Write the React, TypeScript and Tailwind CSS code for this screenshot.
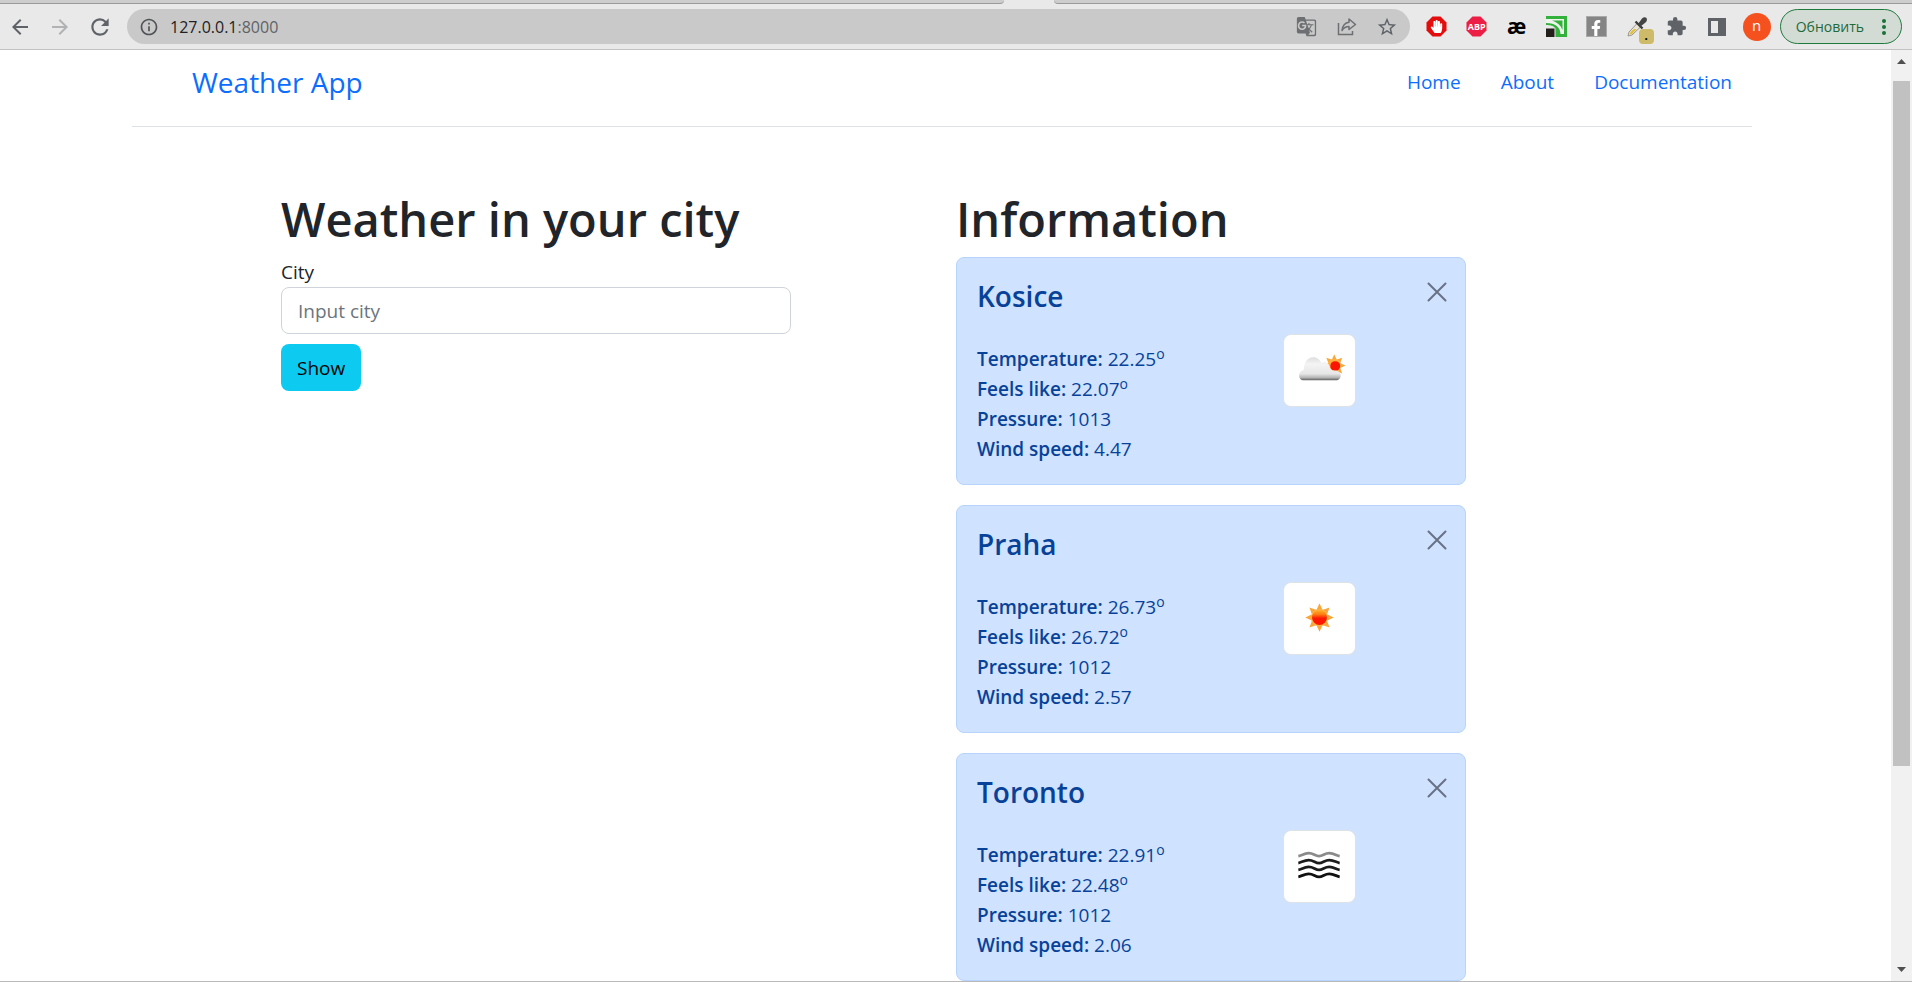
import React from 'react';
import {
  MdArrowBack,
  MdArrowForward,
  MdRefresh,
  MdInfoOutline,
  MdGTranslate,
  MdStarOutline,
  MdExtension,
} from 'react-icons/md';
import { FaHandPaper, FaFacebookF } from 'react-icons/fa';

type City = {
  name: string;
  temperature: string;
  feelsLike: string;
  pressure: string;
  wind: string;
  icon: React.ReactNode;
};

function SunRays({ cx, cy, r }: { cx: number; cy: number; r: number }) {
  return (
    <g transform={`translate(${cx} ${cy}) scale(${r / 14})`}>
      {[0, 45, 90, 135, 180, 225, 270, 315].map((angle) => (
        <path key={angle} d="M-3 -8 L0 -14.500 L3 -8 Z" fill="#f9a73a" transform={`rotate(${angle})`} />
      ))}
      <circle r="8.8" fill="#fbb040" />
    </g>
  );
}

function SunIcon() {
  return (
    <svg viewBox="0 0 62 62" className="size-full" aria-hidden="true">
      <defs>
        <linearGradient id="sun-core" x1="0" y1="0" x2="0" y2="1">
          <stop offset="0" stopColor="#ffb52e" />
          <stop offset="0.3" stopColor="#ff7a10" />
          <stop offset="0.55" stopColor="#fb1a05" />
          <stop offset="1" stopColor="#ff1500" />
        </linearGradient>
      </defs>
      <SunRays cx={31} cy={30} r={14} />
      <circle cx="31" cy="30" r="7.6" fill="url(#sun-core)" />
    </svg>
  );
}

function CloudSunIcon() {
  return (
    <svg viewBox="0 0 62 62" className="size-full" aria-hidden="true">
      <defs>
        <linearGradient id="cloud-body" x1="0" y1="0" x2="0" y2="1">
          <stop offset="0" stopColor="#dedede" />
          <stop offset="0.3" stopColor="#f4f4f4" />
          <stop offset="0.72" stopColor="#e6e6e6" />
          <stop offset="0.88" stopColor="#b5b5b5" />
          <stop offset="1" stopColor="#5c5c5c" />
        </linearGradient>
      </defs>
      <SunRays cx={46} cy={26} r={11} />
      <circle cx="47" cy="26.500" r="5" fill="#fb1505" />
      <path
        d="M15 41 C12 41 10 38.500 10.300 35.500 C10.600 32.500 13 31 15 30.500 C15 22.500 19 17.500 24.500 17.500 C29 17.500 31.500 20 33 23.500 C36.500 21.500 40.500 23 41.500 27.500 C42 30 43 30.800 46 31 C50 31 52.500 33 52.500 36 C52.500 39.500 50 41 47 41 Z"
        fill="url(#cloud-body)"
      />
    </svg>
  );
}

function MistIcon() {
  const wave = 'c3 -0.500 6 -3 10.500 -3 c5 0 6.500 3 10.500 3 c4 0 5.500 -3 10.500 -3 c4.500 0 7.500 2.500 10.500 3';
  return (
    <svg viewBox="0 0 62 62" className="size-full" fill="none" strokeWidth="2.800" aria-hidden="true">
      <path d={`M9.500 20.500 ${wave}`} stroke="#8a8a8a" />
      <path d={`M9.500 27.500 ${wave}`} stroke="#1c1c1c" />
      <path d={`M9.500 34.500 ${wave}`} stroke="#1c1c1c" />
      <path d={`M9.500 41.500 ${wave}`} stroke="#111111" />
    </svg>
  );
}

const cities: City[] = [
  { name: 'Kosice', temperature: '22.25', feelsLike: '22.07', pressure: '1013', wind: '4.47', icon: <CloudSunIcon /> },
  { name: 'Praha', temperature: '26.73', feelsLike: '26.72', pressure: '1012', wind: '2.57', icon: <SunIcon /> },
  { name: 'Toronto', temperature: '22.91', feelsLike: '22.48', pressure: '1012', wind: '2.06', icon: <MistIcon /> },
];

function ToolButton({ label, children }: { label: string; children: React.ReactNode }) {
  return (
    <button type="button" aria-label={label} className="flex h-9 w-10 shrink-0 items-center justify-center text-[#5f6368]">
      {children}
    </button>
  );
}

const octagon = 'M6.500 0.500 H14.500 L20.500 6.500 V14.500 L14.500 20.500 H6.500 L0.500 14.500 V6.500 Z';

function BrowserBar() {
  return (
    <div className="shrink-0 border-b border-[#c2c2c2] bg-[#e9e9e9]">
      <div className="flex h-1">
        <div className="grow-[1004] basis-0 rounded-br-lg border-b border-[#999] bg-[#cdcdcd]" />
        <div className="w-[50px]" />
        <div className="grow-[858] basis-0 rounded-bl-lg border-b border-[#999] bg-[#cdcdcd]" />
      </div>
      <div className="flex h-[45px] items-center pr-[10px]">
        <ToolButton label="Back"><MdArrowBack size={24} /></ToolButton>
        <ToolButton label="Forward"><MdArrowForward size={24} className="text-[#b0b2b4]" /></ToolButton>
        <ToolButton label="Reload"><MdRefresh size={26} /></ToolButton>
        <div className="mx-[7px] flex h-[35px] min-w-0 grow items-center rounded-full bg-[#c9c9c9] pr-[3px]">
          <MdInfoOutline size={20} className="ml-3 shrink-0 text-[#505357]" />
          <span className="ml-[11px] grow font-['Open_Sans','Noto_Sans',sans-serif] text-[16px] text-[#1f2124]">
            127.0.0.1<span className="text-[#5f6368]">:8000</span>
          </span>
          <ToolButton label="Translate"><MdGTranslate size={21} className="text-[#6d6f72]" /></ToolButton>
          <ToolButton label="Share">
            <svg width="20" height="20" viewBox="0 0 20 20" fill="none" stroke="#6d6f72" strokeWidth="1.500" aria-hidden="true">
              <path d="M1.500 6 V17.500 H15.500 V14" />
              <path d="M12 2 L18.500 7.500 L12 12.500 V9.500 C8.500 9.500 6.500 11 5 13.500 C5.500 9 8 5.800 12 5.300 Z" strokeLinejoin="round" />
            </svg>
          </ToolButton>
          <ToolButton label="Bookmark"><MdStarOutline size={22} /></ToolButton>
        </div>
        <ToolButton label="AdBlock">
          <span className="relative flex size-[21px] items-center justify-center">
            <svg viewBox="0 0 21 21" className="absolute inset-0 size-full" aria-hidden="true">
              <path d={octagon} fill="#e40d0d" />
            </svg>
            <FaHandPaper size={13} className="relative text-white" />
          </span>
        </ToolButton>
        <ToolButton label="Adblock Plus">
          <span className="relative flex size-[21px] items-center justify-center">
            <svg viewBox="0 0 21 21" className="absolute inset-0 size-full" aria-hidden="true">
              <path d={octagon} fill="#ed1e45" />
            </svg>
            <span className="relative font-['Open_Sans',sans-serif] text-[9px] font-bold text-white">ABP</span>
          </span>
        </ToolButton>
        <ToolButton label="Dictionary">
          <span className="pb-[2px] font-['Open_Sans',sans-serif] text-[21px] leading-5 font-bold text-black">æ</span>
        </ToolButton>
        <ToolButton label="Wallet">
          <svg width="21" height="21" viewBox="0 0 21 21" aria-hidden="true">
            <path d="M0 0 H21 V21 H9 V12 H0 Z" fill="#32b13b" />
            <path d="M0 3 H18 V18 H14.500 C14.500 11.500 9.500 7 0 7 Z" fill="#eef3ee" />
            <path d="M6 4.500 H16.500 V14 C14.500 9 11 6 6 4.500 Z" fill="#32b13b" />
            <path d="M0 9 C4 9 7.500 9.500 9.500 12.500 V21 H8.500 V12 H0 Z" fill="#e9e9e9" />
            <path d="M0 12.500 H8.500 V21 H0 Z" fill="#231f1a" />
          </svg>
        </ToolButton>
        <ToolButton label="Facebook">
          <span className="flex size-[21px] items-end justify-end border border-[#a9a9a9] bg-[#858585] pr-[2px]">
            <FaFacebookF size={16} className="text-white" />
          </span>
        </ToolButton>
        <ToolButton label="Color picker">
          <span className="relative block size-5">
            <svg viewBox="0 0 20 20" className="size-full" aria-hidden="true">
              <path d="M1 19 L2 15 L10 6.500 L13.500 10 L5 18 Z" fill="#e8e4d8" stroke="#9a968c" />
              <path d="M2.500 17.500 L4 14.500 L7 12 L9.500 12 L5 17 Z" fill="#e2bf33" />
              <path d="M8.500 4.500 L15.500 11.500" stroke="#3b3b3b" strokeWidth="2.400" />
              <path d="M11 7 L15 1.500 C16.500 0 18.500 0 19.500 1 C20.500 3 19.500 4.500 18.500 5.500 L13.500 9.500 Z" fill="#454545" />
            </svg>
            <span className="absolute top-3 left-3 flex size-[15px] items-center justify-center rounded-sm bg-[#cdbb69] text-[12px] font-bold text-black">.</span>
          </span>
        </ToolButton>
        <ToolButton label="Extensions"><MdExtension size={21} /></ToolButton>
        <ToolButton label="Side panel">
          <svg width="18" height="18" viewBox="0 0 18 18" aria-hidden="true">
            <path d="M0 0 H18 V18 H0 Z M3 3 V15 H10 V3 Z" fill="#5f6368" fillRule="evenodd" />
          </svg>
        </ToolButton>
        <ToolButton label="Profile">
          <span className="flex size-7 items-center justify-center rounded-full bg-[#f4511e] pb-[2px] font-['Open_Sans',sans-serif] text-[15px] text-white">n</span>
        </ToolButton>
        <button
          type="button"
          className="ml-[3px] flex h-[35px] shrink-0 items-center gap-[18px] rounded-full border border-[#1e7a3c] bg-[#d3dbd5] px-[15px] font-['Open_Sans','Noto_Sans',sans-serif] text-[14px] text-[#1e6a38]"
        >
          Обновить
          <svg width="4" height="16" viewBox="0 0 4 16" fill="#1a7037" aria-hidden="true">
            <circle cx="2" cy="2" r="2" />
            <circle cx="2" cy="8" r="2" />
            <circle cx="2" cy="14" r="2" />
          </svg>
        </button>
      </div>
    </div>
  );
}

function Fact({ label, children }: { label: string; children: React.ReactNode }) {
  return (
    <p>
      <b className="font-semibold">{label}:</b> {children}
    </p>
  );
}

function Degrees({ value }: { value: string }) {
  return (
    <>
      {value}
      <sup className="text-[14px]">o</sup>
    </>
  );
}

function CityCard({ city }: { city: City }) {
  return (
    <article className="relative rounded-lg border border-[#b6d4fe] bg-[#cfe2ff] p-5 text-[#084298]">
      <h2 className="text-[28px] leading-9 font-semibold">{city.name}</h2>
      <div className="mt-5 grid grid-cols-[306px_1fr]">
        <div className="pt-[10px]">
          <Fact label="Temperature"><Degrees value={city.temperature} /></Fact>
          <Fact label="Feels like"><Degrees value={city.feelsLike} /></Fact>
          <Fact label="Pressure">{city.pressure}</Fact>
          <Fact label="Wind speed">{city.wind}</Fact>
        </div>
        <div className="size-[73px] rounded-lg border border-[#dee2e6] bg-white p-[5px]">{city.icon}</div>
      </div>
      <button type="button" aria-label={`Remove ${city.name}`} className="absolute top-[23px] right-[17px] p-px text-[#687284]">
        <svg width="20" height="20" viewBox="0 0 20 20" fill="none" stroke="currentColor" strokeWidth="2" strokeLinecap="round" aria-hidden="true">
          <path d="M1.500 1.500 L18.500 18.500 M18.500 1.500 L1.500 18.500" />
        </svg>
      </button>
    </article>
  );
}

function ScrollBar() {
  return (
    <div className="flex w-[21px] shrink-0 flex-col items-center justify-between bg-[#f1f1f1] py-[9px]" aria-hidden="true">
      <svg width="9" height="5" viewBox="0 0 9 5" fill="#505050"><path d="M0 5 L4.500 0 L9 5 Z" /></svg>
      <div className="mt-[17px] mb-auto h-[75%] w-[17px] bg-[#c1c1c1]" />
      <svg width="9" height="5" viewBox="0 0 9 5" fill="#505050"><path d="M0 0 L4.500 5 L9 0 Z" /></svg>
    </div>
  );
}

export default function App() {
  return (
    <div className="flex h-screen flex-col overflow-hidden border-b border-[#b9b9b9] bg-white">
      <BrowserBar />
      <div className="flex min-h-0 grow">
        <div className="min-w-0 grow overflow-hidden font-['Open_Sans','Noto_Sans',sans-serif] text-[19px] leading-[30px] text-[#212529]">
          <header className="mr-[139px] ml-[132px] flex items-center justify-between border-b border-[#dee2e6] pt-[14px] pr-5 pb-[26px] pl-[60px] text-[#0d6efd]">
            <a href="#home" className="text-[28px] leading-9">Weather App</a>
            <nav className="flex gap-10">
              <a href="#home">Home</a>
              <a href="#about">About</a>
              <a href="#documentation">Documentation</a>
            </nav>
          </header>
          <main className="mt-[62px] grid grid-cols-2 gap-[165px] pr-[425px] pl-[281px]">
            <section>
              <h1 className="mb-2 text-[47px] leading-[60px] font-semibold">Weather in your city</h1>
              <form className="flex flex-col items-start" onSubmit={(event) => event.preventDefault()}>
                <label htmlFor="city">City</label>
                <input
                  id="city"
                  type="text"
                  placeholder="Input city"
                  className="h-[47px] w-full rounded-lg border border-[#ced4da] bg-white px-4 placeholder:text-[#6c757d]"
                />
                <button type="submit" className="mt-[10px] h-[47px] rounded-lg bg-[#0dcaf0] px-4 text-black">
                  Show
                </button>
              </form>
            </section>
            <section>
              <h1 className="mb-2 text-[47px] leading-[60px] font-semibold">Information</h1>
              <div className="flex flex-col gap-5">
                {cities.map((city) => (
                  <CityCard key={city.name} city={city} />
                ))}
              </div>
            </section>
          </main>
        </div>
        <ScrollBar />
      </div>
    </div>
  );
}
